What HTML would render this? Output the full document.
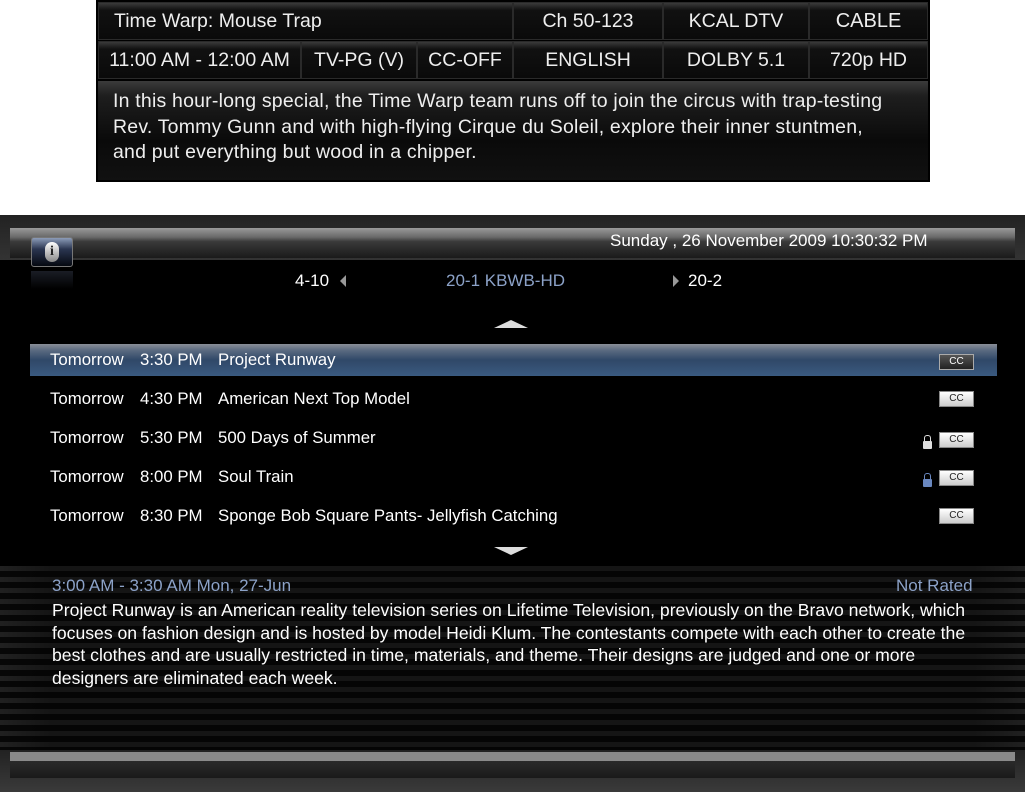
<!DOCTYPE html>
<html><head><meta charset="utf-8"><style>
*{margin:0;padding:0;box-sizing:border-box}
body{width:1025px;height:792px;background:#fff;position:relative;overflow:hidden;font-family:"Liberation Sans",sans-serif}
.abs{position:absolute}
#panel{left:96px;top:0;width:834px;height:182px;background:#000}
.cell{position:absolute;height:38px;background:linear-gradient(#3a3a3a,#111 20%,#0a0a0a);border:1px solid #2a2a2a;color:#eee;font-size:19.5px;line-height:36px;text-align:center;white-space:nowrap}
#desc{position:absolute;left:2px;top:81px;width:830px;height:99px;background:linear-gradient(#3b3b3b,#1e1e1e 15%,#0a0a0a 60%,#111);color:#eee;font-size:19.5px;letter-spacing:0.2px;line-height:25.5px;padding:8px 0 0 15px;white-space:nowrap}
#tv{left:0;top:215px;width:1025px;height:577px;background:#000}
.bar{position:absolute;left:10px;width:1005px;background:linear-gradient(#9a9a9a,#6a6a6a 30%,#3a3a3a 45%,#1a1a1a)}
.t{position:absolute;color:#fff;font-size:17px;white-space:nowrap;font-family:"Liberation Sans",sans-serif}
.row{position:absolute;left:50px;color:#fff;font-size:16.8px;white-space:nowrap;font-family:"Liberation Sans",sans-serif}
.row span{display:inline-block}
.cc{position:absolute;left:939px;width:35px;height:16px;background:linear-gradient(#fff,#ccc);border:1px solid #888;color:#222;font-size:10px;line-height:14px;text-align:center;font-family:"Liberation Sans",sans-serif}
.lock{position:absolute;left:923px;width:9px;height:8px;border-radius:1px}
.lock:before{content:"";position:absolute;left:1px;top:-6px;width:5px;height:6px;border:1.5px solid currentColor;border-bottom:none;border-radius:3px 3px 0 0}
</style></head><body>
<div id="panel" class="abs">
<div class="cell" style="left:2px;top:2px;width:415px;text-align:left;padding-left:15px">Time Warp: Mouse Trap</div>
<div class="cell" style="left:417px;top:2px;width:150px">Ch 50-123</div>
<div class="cell" style="left:567px;top:2px;width:146px">KCAL DTV</div>
<div class="cell" style="left:713px;top:2px;width:119px;font-size:20px">CABLE</div>
<div class="cell" style="left:2px;top:41px;width:203px">11:00 AM - 12:00 AM</div>
<div class="cell" style="left:205px;top:41px;width:116px">TV-PG (V)</div>
<div class="cell" style="left:321px;top:41px;width:96px">CC-OFF</div>
<div class="cell" style="left:417px;top:41px;width:150px">ENGLISH</div>
<div class="cell" style="left:567px;top:41px;width:146px">DOLBY 5.1</div>
<div class="cell" style="left:713px;top:41px;width:119px">720p HD</div>
<div id="desc">In this hour-long special, the Time Warp team runs off to join the circus with trap-testing<br>Rev. Tommy Gunn and with high-flying Cirque du Soleil, explore their inner stuntmen,<br>and put everything but wood in a chipper.</div>
</div>

<div id="tv" class="abs">
<div class="abs" style="left:0;top:0;width:1025px;height:45px;background:linear-gradient(#222,#333)"></div>
<div class="bar" style="top:13px;height:30px"></div>
<div class="abs" style="left:31px;top:22px;width:42px;height:30px;border-radius:3px;background:linear-gradient(#8c9cb8,#2a3550 40%,#050810);border:1px solid #777"><div style="position:absolute;left:13px;top:4px;width:14px;height:20px;border-radius:7px;background:linear-gradient(#fff,#888);color:#222;font:bold 14px 'Liberation Serif',serif;text-align:center;line-height:20px">i</div></div>
<div class="abs" style="left:31px;top:56px;width:42px;height:18px;background:linear-gradient(#1a1d25,#000)"></div>
<div class="t" style="left:610px;top:16px">Sunday , 26 November 2009 10:30:32 PM</div>
<div class="t" style="left:295px;top:56px">4-10</div>
<div class="abs" style="left:340px;top:60px;width:0;height:0;border-top:6px solid transparent;border-bottom:6px solid transparent;border-right:6px solid #999"></div>
<div class="t" style="left:446px;top:56px;color:#8ca2c8">20-1 KBWB-HD</div>
<div class="abs" style="left:673px;top:60px;width:0;height:0;border-top:6px solid transparent;border-bottom:6px solid transparent;border-left:6px solid #999"></div>
<div class="t" style="left:688px;top:56px">20-2</div>
<div class="abs" style="left:494px;top:105px;width:0;height:0;border-left:17px solid transparent;border-right:17px solid transparent;border-bottom:8px solid #ddd"></div>

<div class="abs" style="left:30px;top:129px;width:967px;height:32px;background:linear-gradient(#8a8f98,#5a6a80 20%,#304868 50%,#3a5a80)"></div>
<div class="row" style="top:135px"><span style="width:90px">Tomorrow</span><span style="width:78px">3:30 PM</span>Project Runway</div>
<div class="cc" style="top:139px;background:linear-gradient(#555,#222);color:#fff;border-color:#aaa">CC</div>
<div class="row" style="top:174px"><span style="width:90px">Tomorrow</span><span style="width:78px">4:30 PM</span>American Next Top Model</div>
<div class="cc" style="top:176px">CC</div>
<div class="row" style="top:213px"><span style="width:90px">Tomorrow</span><span style="width:78px">5:30 PM</span>500 Days of Summer</div>
<div class="lock" style="top:226px;color:#ddd;background:#ddd"></div>
<div class="cc" style="top:217px">CC</div>
<div class="row" style="top:252px"><span style="width:90px">Tomorrow</span><span style="width:78px">8:00 PM</span>Soul Train</div>
<div class="lock" style="top:264px;color:#6a88c0;background:#6a88c0"></div>
<div class="cc" style="top:255px">CC</div>
<div class="row" style="top:291px"><span style="width:90px">Tomorrow</span><span style="width:78px">8:30 PM</span>Sponge Bob Square Pants- Jellyfish Catching</div>
<div class="cc" style="top:293px">CC</div>
<div class="abs" style="left:494px;top:332px;width:0;height:0;border-left:17px solid transparent;border-right:17px solid transparent;border-top:8px solid #ddd"></div>

<div class="abs" style="left:0;top:351px;width:1025px;height:184px;background:repeating-linear-gradient(#2e2e2e 0 5px,#0a0a0a 5px 11px);"></div>
<div class="abs" style="left:0;top:351px;width:1025px;height:184px;background:linear-gradient(90deg,rgba(0,0,0,.3),rgba(0,0,0,.55) 5%,rgba(0,0,0,.55) 95%,rgba(0,0,0,.3))"></div>
<div class="t" style="left:52px;top:361px;color:#8ca2c8">3:00 AM - 3:30 AM Mon, 27-Jun</div>
<div class="t" style="left:896px;top:361px;color:#8ca2c8">Not Rated</div>
<div class="t" style="left:52px;top:384px;line-height:22.5px;font-size:17.6px">Project Runway is an American reality television series on Lifetime Television, previously on the Bravo network, which<br>focuses on fashion design and is hosted by model Heidi Klum. The contestants compete with each other to create the<br>best clothes and are usually restricted in time, materials, and theme. Their designs are judged and one or more<br>designers are eliminated each week.</div>

<div class="abs" style="left:0;top:535px;width:1025px;height:42px;background:linear-gradient(#222,#3a3a3a)"></div>
<div class="abs" style="left:10px;top:537px;width:1005px;height:9px;background:#8a8a8a"></div>
<div class="abs" style="left:10px;top:546px;width:1005px;height:17px;background:linear-gradient(#2a2a2a,#1a1a1a)"></div>
</div>
</body></html>
